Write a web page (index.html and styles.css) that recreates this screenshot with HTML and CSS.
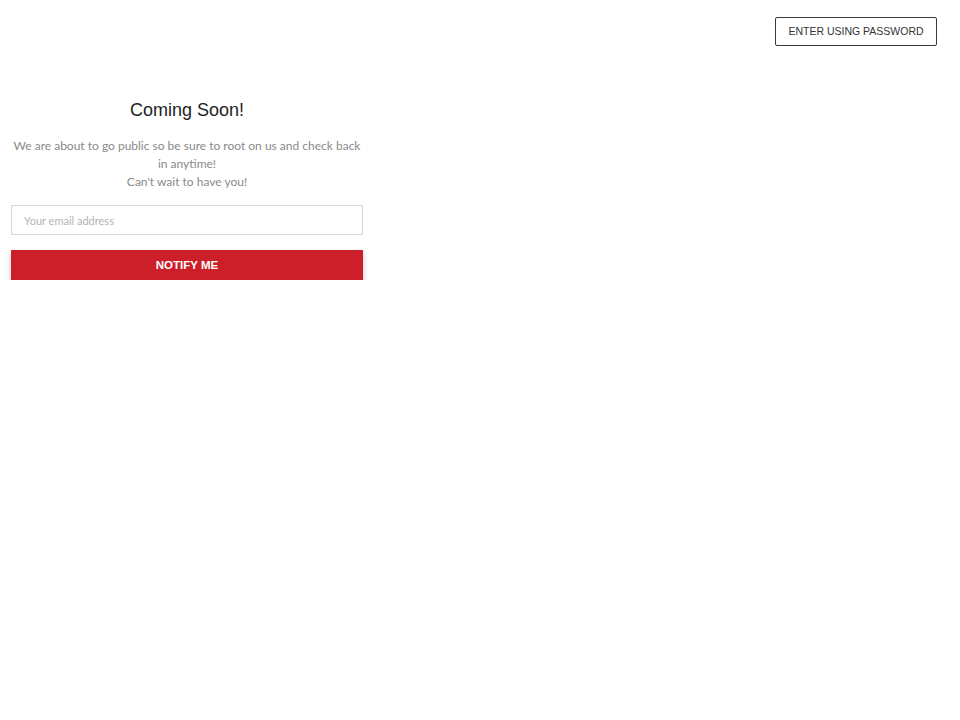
FILE: index.html
```html
<!DOCTYPE html>
<html lang="en">
<head>
<meta charset="utf-8">
<title>Coming Soon</title>
<link rel="stylesheet" href="styles.css">
</head>
<body>
<header class="topbar">
  <button class="pw-btn" type="button">ENTER USING PASSWORD</button>
</header>
<main class="signup">
  <h1 class="title">Coming Soon!</h1>
  <p class="lead">We are about to go public so be sure to root on us and check back in anytime!<br>Can't wait to have you!</p>
  <form class="form">
    <input class="email" type="email" placeholder="Your email address">
    <button class="notify" type="button">NOTIFY ME</button>
  </form>
</main>
</body>
</html>
```
FILE: styles.css
```css
html, body {
  margin: 0;
  padding: 0;
  background: #ffffff;
}
body {
  font-family: "Liberation Sans", Arial, sans-serif;
  color: #222;
}
.topbar {
  display: flex;
  justify-content: flex-end;
  padding: 17px 23px 0 0;
}
.pw-btn {
  width: 162px;
  height: 29px;
  border: 1px solid #3a3a3a;
  border-radius: 2px;
  background: #fff;
  color: #333;
  font-family: "Liberation Sans", Arial, sans-serif;
  font-size: 10.5px;
  padding: 0 0 1px;
  cursor: pointer;
}
.signup {
  width: 352px;
  margin-left: 11px;
  margin-top: 53px;
  display: flex;
  flex-direction: column;
  align-items: stretch;
}
.title {
  margin: 0;
  text-align: center;
  font-size: 18px;
  line-height: 22px;
  font-weight: normal;
  color: #1e1e1e;
}
.lead {
  margin: 16px 0 0;
  text-align: center;
  font-family: Lato, sans-serif;
  font-size: 12px;
  line-height: 18px;
  color: #8a8a8a;
}
.form {
  margin-top: 14px;
  display: flex;
  flex-direction: column;
  gap: 15px;
}
.email {
  box-sizing: border-box;
  height: 30px;
  border: 1px solid #d6d6d6;
  padding: 0 12px;
  font-family: Lato, sans-serif;
  font-size: 11px;
  color: #333;
  outline: none;
}
.email::placeholder {
  color: #b4b4b4;
}
.notify {
  height: 30px;
  border: none;
  background: #cc1f2a;
  color: #fff;
  font-family: "Liberation Sans", Arial, sans-serif;
  font-weight: bold;
  font-size: 11.5px;
  box-shadow: 0 3px 6px rgba(0,0,0,0.22);
  cursor: pointer;
}
```
